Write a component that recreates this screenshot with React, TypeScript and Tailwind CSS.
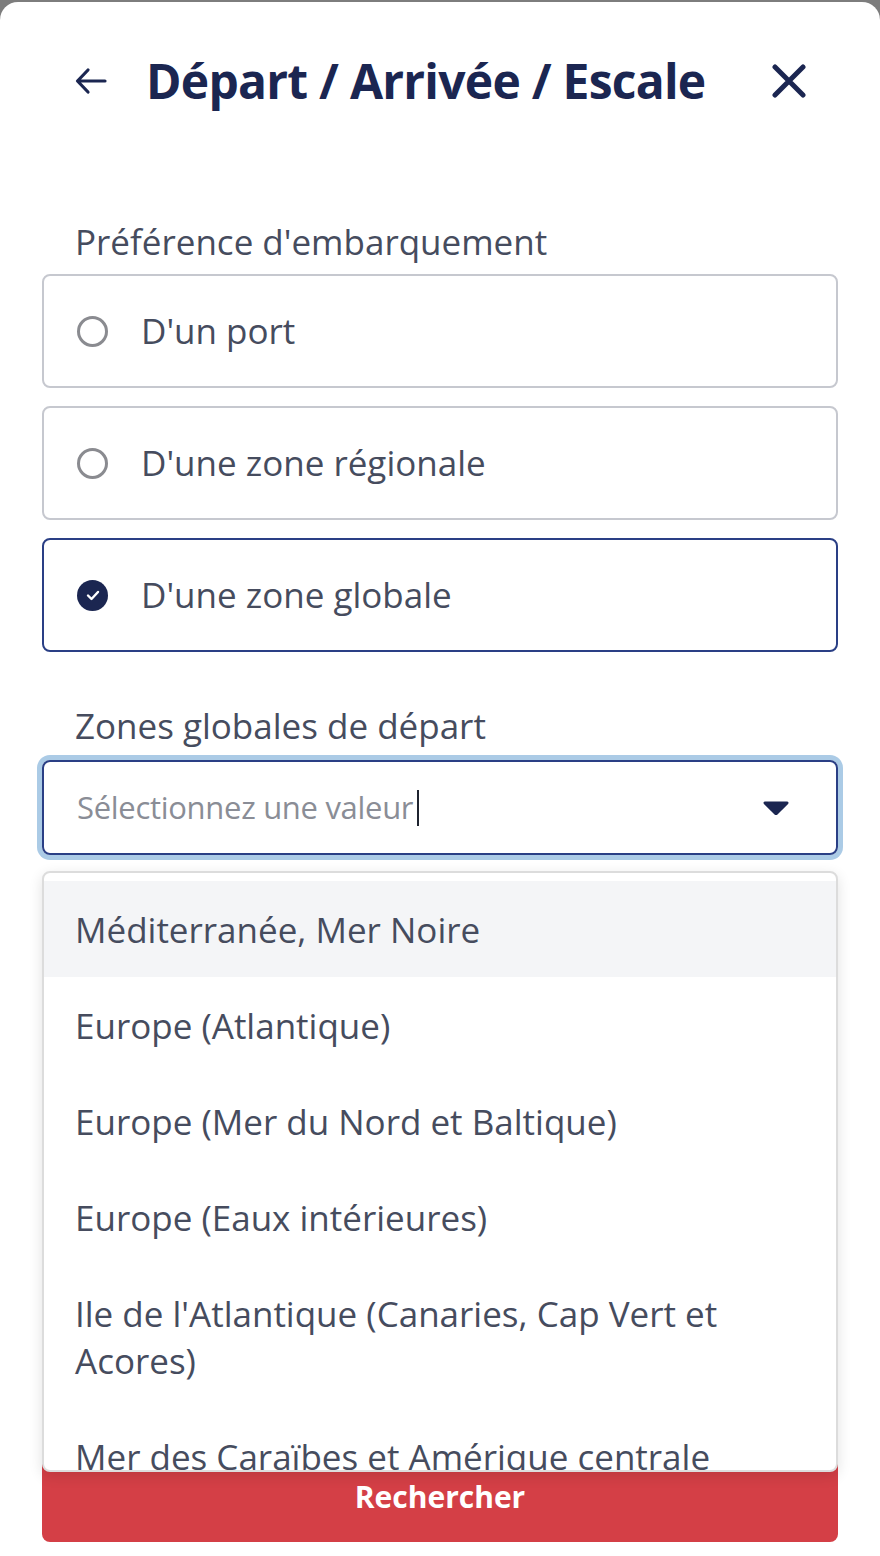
import React from 'react';

const font = { fontFamily: '"Open Sans", "Noto Sans", sans-serif' };

const options = [
  { label: "D'un port", checked: false },
  { label: "D'une zone régionale", checked: false },
  { label: "D'une zone globale", checked: true },
];

const zones = [
  'Méditerranée, Mer Noire',
  'Europe (Atlantique)',
  'Europe (Mer du Nord et Baltique)',
  'Europe (Eaux intérieures)',
  "Ile de l'Atlantique (Canaries, Cap Vert et Acores)",
  'Mer des Caraïbes et Amérique centrale',
  'Amérique du Nord',
];

const Radio = ({ checked }: { checked: boolean }) =>
  checked ? (
    <span className="flex h-[31px] w-[31px] items-center justify-center rounded-full bg-[#1b2651]">
      <svg width="14" height="11" viewBox="0 0 14 11" fill="none">
        <path d="M2 5.5l3.5 3.5L12 2" stroke="white" strokeWidth="2.4" strokeLinecap="round" strokeLinejoin="round" />
      </svg>
    </span>
  ) : (
    <span className="h-[31px] w-[31px] rounded-full border-[3px] border-[#8a8b90]" />
  );

export default function App() {
  return (
    <div className="min-h-[1556px] bg-[#7d7d7d] pt-[2px]" style={font}>
      <div className="min-h-[1554px] rounded-t-[18px] bg-white px-[42px]">
        {/* header */}
        <div className="flex h-[80px] items-center pt-[78px]">
          <div className="flex w-full items-center">
            <svg className="ml-[33px]" width="32" height="28" viewBox="0 0 32 28" fill="none">
              <path d="M30 14H3M13 3L2.5 14 13 25" stroke="#1b2651" strokeWidth="3.2" strokeLinecap="round" strokeLinejoin="round" />
            </svg>
            <h1 className="ml-[39px] text-[48px] font-bold leading-none tracking-[-0.75px] text-[#1b2651]">
              Départ / Arrivée / Escale
            </h1>
            <svg className="ml-auto mr-[32px]" width="34" height="34" viewBox="0 0 34 34" fill="none">
              <path d="M3 3l28 28M31 3L3 31" stroke="#1b2651" strokeWidth="5" strokeLinecap="round" />
            </svg>
          </div>
        </div>

        {/* preference */}
        <p className="mt-[140px] pl-[33px] text-[35px] leading-[40px] text-[#464c5e]">Préférence d'embarquement</p>
        <div className="mt-[12px] flex flex-col gap-[18px]">
          {options.map((o) => (
            <div
              key={o.label}
              className={
                o.checked
                  ? 'flex h-[114px] items-center gap-[33px] rounded-[8px] border-2 border-[#2a3f85] pl-[33px]'
                  : 'flex h-[114px] items-center gap-[33px] rounded-[8px] border-2 border-[#c6c8cf] pl-[33px]'
              }
            >
              <Radio checked={o.checked} />
              <span className="text-[35px] text-[#464c5e]">{o.label}</span>
            </div>
          ))}
        </div>

        {/* zones */}
        <p className="mt-[54px] pl-[33px] text-[35px] leading-[40px] text-[#464c5e]">Zones globales de départ</p>
        <div className="relative mt-[14px]">
          <div className="flex h-[95px] items-center rounded-[8px] border-2 border-[#2a3f85] pl-[33px] pr-[46px] ring-[5px] ring-[#abcbe6]">
            <span className="text-[31px] tracking-[-0.3px] text-[#8a8d96]">Sélectionnez une valeur</span>
            <span className="ml-[4px] h-[36px] w-[2px] bg-[#1f2430]" />
            <svg className="ml-auto" width="28" height="16" viewBox="0 0 28 16">
              <path d="M3 1.5h22c1.4 0 2 1.4 1.1 2.4l-10.6 10.6c-.8.8-2.2.8-3 0L1.9 3.9C1 2.9 1.6 1.5 3 1.5z" fill="#1b2651" />
            </svg>
          </div>

          <div className="absolute left-0 right-0 top-[111px] z-10 h-[601px] overflow-hidden rounded-[8px] border-2 border-[#dcdcdc] bg-white pt-[8px] shadow-[0_4px_14px_rgba(0,0,0,0.12)]">
            {zones.map((z, i) => (
              <div
                key={z}
                className={
                  i === 0
                    ? 'bg-[#f4f5f7] py-[24.5px] pl-[31px] pr-[40px] text-[35px] leading-[47px] text-[#464c5e]'
                    : 'py-[24.5px] pl-[31px] pr-[40px] text-[35px] leading-[47px] text-[#464c5e]'
                }
              >
                {z}
              </div>
            ))}
          </div>
        </div>

        <button className="mt-[595px] flex h-[92px] w-full items-center justify-center rounded-[8px] bg-[#d43f46] text-[30px] font-bold text-white">
          Rechercher
        </button>
      </div>
    </div>
  );
}
